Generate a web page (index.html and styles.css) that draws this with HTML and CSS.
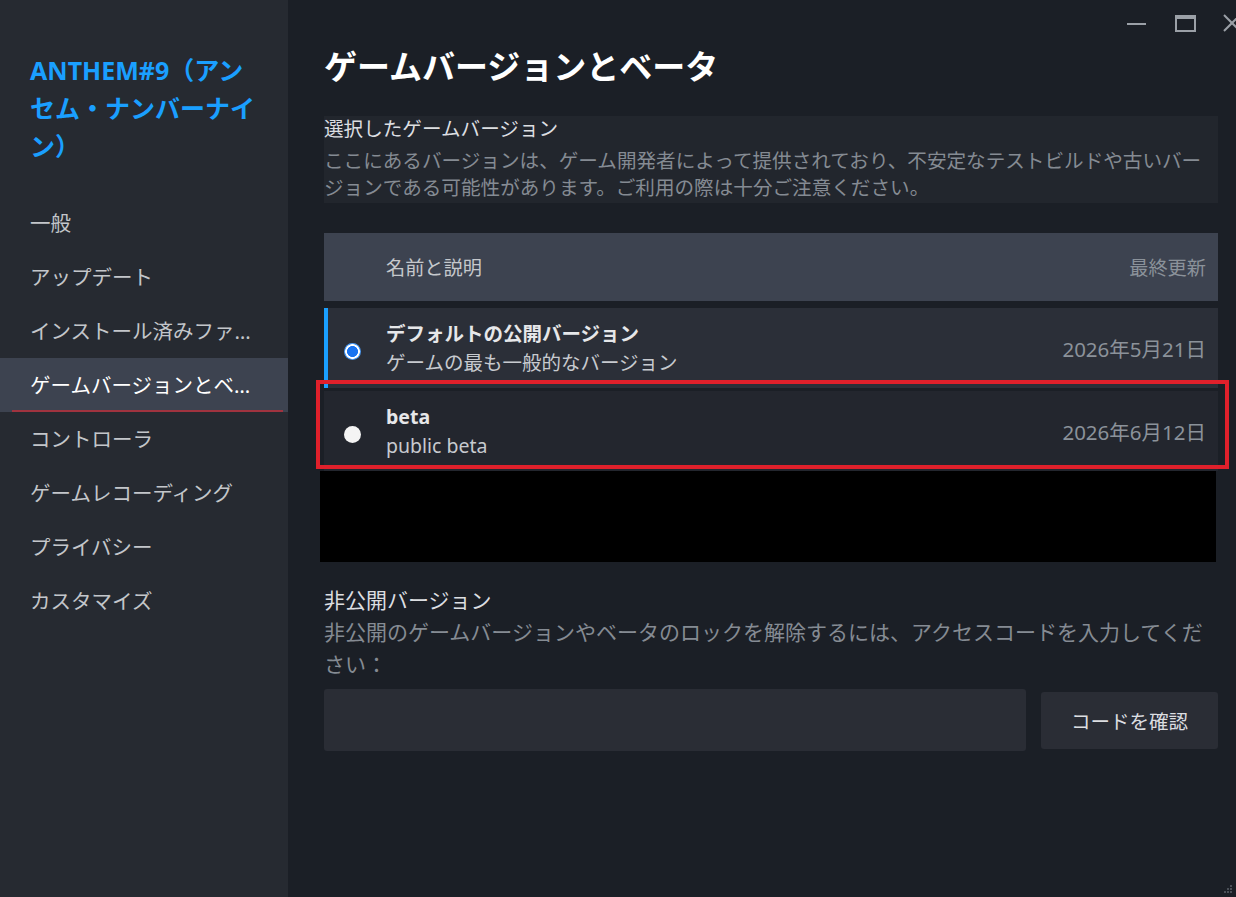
FILE: index.html
```html
<!DOCTYPE html>
<html lang="ja">
<head>
    <meta charset="UTF-8">
    <meta name="viewport" content="width=device-width, initial-scale=1.0">
    <title>プロパティ - ゲームバージョンとベータ</title>
<link rel="stylesheet" href="styles.css">
</head>
<body>
    <div class="window">
        <nav class="sidebar">
            <h2 class="game-title">ANTHEM#9（アンセム・ナンバーナイン）</h2>
            <ul class="menu">
                <li>一般</li>
                <li>アップデート</li>
                <li>インストール済みファイル</li>
                <li class="active">ゲームバージョンとベータ</li>
                <li>コントローラ</li>
                <li>ゲームレコーディング</li>
                <li>プライバシー</li>
                <li>カスタマイズ</li>
            </ul>
        </nav>

        <main class="content">
            <!-- window buttons: minimize / maximize / close -->
            <svg class="winctrl" width="120" height="40" viewBox="0 0 120 40">
                <line x1="11" y1="24" x2="30" y2="24" stroke="#9ba0a7" stroke-width="2"/>
                <rect x="60" y="16" width="19" height="15" fill="none" stroke="#9ba0a7" stroke-width="2"/>
                <line x1="59" y1="17.5" x2="80" y2="17.5" stroke="#9ba0a7" stroke-width="3"/>
                <line x1="108" y1="15" x2="124" y2="31" stroke="#9ba0a7" stroke-width="2"/>
                <line x1="124" y1="15" x2="108" y2="31" stroke="#9ba0a7" stroke-width="2"/>
            </svg>

            <h1 class="page-title">ゲームバージョンとベータ</h1>

            <div class="notice">
                <h3>選択したゲームバージョン</h3>
                <p>ここにあるバージョンは、ゲーム開発者によって提供されており、不安定なテストビルドや古いバージョンである可能性があります。ご利用の際は十分ご注意ください。</p>
            </div>

            <div class="table-head">
                <span>名前と説明</span>
                <span class="muted">最終更新</span>
            </div>

            <div class="versions">
                <div class="row selected">
                    <span class="radio on"></span>
                    <div class="info">
                        <strong>デフォルトの公開バージョン</strong>
                        <span>ゲームの最も一般的なバージョン</span>
                    </div>
                    <span class="date">2026年5月21日</span>
                </div>
                <div class="row">
                    <span class="radio"></span>
                    <div class="info">
                        <strong>beta</strong>
                        <span>public beta</span>
                    </div>
                    <span class="date">2026年6月12日</span>
                </div>
                <div class="empty"></div>
                <div class="highlight"></div>
            </div>

            <div class="private">
                <h3>非公開バージョン</h3>
                <p>非公開のゲームバージョンやベータのロックを解除するには、アクセスコードを入力してください：</p>
                <div class="code-row">
                    <input class="code-input" type="text">
                    <button class="code-btn">コードを確認</button>
                </div>
            </div>

            <svg class="grip" width="10" height="10" viewBox="0 0 10 10">
                <rect x="7" y="1" width="2" height="2" fill="#4a4f57"/>
                <rect x="4" y="4" width="2" height="2" fill="#4a4f57"/>
                <rect x="7" y="4" width="2" height="2" fill="#4a4f57"/>
                <rect x="1" y="7" width="2" height="2" fill="#4a4f57"/>
                <rect x="4" y="7" width="2" height="2" fill="#4a4f57"/>
                <rect x="7" y="7" width="2" height="2" fill="#4a4f57"/>
            </svg>
        </main>
    </div>
</body>
</html>
```

FILE: styles.css
```css
*{
    padding: 0;
    margin: 0;
    box-sizing: border-box;
}
body{
    height: 100vh;
    width: 100%;
    overflow: hidden;
    background: #1b1f26;
    font-family: "Noto Sans", "Noto Sans CJK JP", sans-serif;
}
.window{
    height: 100%;
    display: flex;
}

/* left column */
.sidebar{
    width: 288px;
    flex-shrink: 0;
    background: #262a31;
}
.game-title{
    padding: 51px 26px 0 30px;
    color: #1a9fff;
    font-size: 25px;
    line-height: 38px;
    font-weight: 700;
}
.menu{
    list-style: none;
    margin-top: 31px;
}
.menu li{
    position: relative;
    height: 54px;
    line-height: 54px;
    padding: 0 28px 0 30px;
    color: #c3c6ca;
    font-size: 20.5px;
    white-space: nowrap;
    overflow: hidden;
    text-overflow: ellipsis;
}
.menu li.active{
    background: #3d4350;
    color: #fff;
}
.menu li.active::after{
    content: "";
    position: absolute;
    left: 12px;
    right: 5px;
    bottom: 0;
    height: 2px;
    background: #a0333f;
}

/* right column */
.content{
    position: relative;
    flex: 1;
    padding: 47px 18px 0 36px;
}
.winctrl{
    position: absolute;
    top: 0;
    right: 0;
}
.grip{
    position: absolute;
    right: 3px;
    bottom: 3px;
}
.page-title{
    color: #fff;
    font-size: 33px;
    line-height: 40px;
    font-weight: 700;
}
.notice{
    margin-top: 29px;
    background: #22262d;
    padding-bottom: 2px;
}
.notice h3{
    color: #dcdee1;
    font-size: 19.6px;
    font-weight: 400;
    line-height: 26px;
    margin-bottom: 5px;
}
.notice p{
    color: #858b93;
    font-size: 19.6px;
    line-height: 27px;
}

.table-head{
    margin-top: 30px;
    height: 68px;
    background: #3d4350;
    display: flex;
    align-items: center;
    justify-content: space-between;
    padding: 0 12px 0 62px;
    color: #c5c8cc;
    font-size: 19.2px;
}
.muted{
    color: #8b929a;
    font-size: 19.2px;
}

.versions{
    position: relative;
    margin-top: 7px;
}
.row{
    height: 80px;
    display: flex;
    align-items: center;
    padding: 0 12px 0 20px;
    background: #23262e;
    margin-bottom: 3px;
}
.row.selected{
    background: #2b2f38;
    border-left: 4px solid #1a9fff;
    padding-left: 16px;
}
.radio{
    width: 17px;
    height: 17px;
    border-radius: 50%;
    background: #f4f4f4;
    flex-shrink: 0;
    margin-top: 6px;
}
.radio.on{
    background: radial-gradient(circle closest-side, #1a74f0 0 5.2px, #fff 5.8px 7px, #4d9cf5 7.6px);
}
.info{
    flex: 1;
    display: flex;
    flex-direction: column;
    margin-left: 25px;
    line-height: 29px;
}
.info strong{
    color: #e6e7e9;
    font-size: 19.5px;
    font-weight: 700;
}
.info span{
    color: #c7cacf;
    font-size: 19.5px;
}
.date{
    color: #8b929a;
    font-size: 20.5px;
}
.empty{
    height: 91px;
    margin: -3px 2px 0 -4px;
    background: #000;
}
.highlight{
    position: absolute;
    top: 72px;
    left: -8px;
    right: -11px;
    height: 89px;
    border: 4px solid #e0202b;
    pointer-events: none;
}

.private{
    margin-top: 22px;
}
.private h3{
    color: #dcdee1;
    font-size: 21px;
    font-weight: 400;
    line-height: 32px;
}
.private p{
    color: #858b93;
    font-size: 21px;
    line-height: 32px;
}
.code-row{
    margin-top: 9px;
    display: flex;
    align-items: center;
    gap: 15px;
}
.code-input{
    width: 702px;
    height: 62px;
    border: none;
    border-radius: 3px;
    background: #2a2d35;
    outline: none;
}
.code-btn{
    flex: 1;
    height: 57px;
    border: none;
    border-radius: 3px;
    background: #2a2d35;
    color: #dcdee1;
    font-family: "Noto Sans CJK JP", sans-serif;
    font-size: 19.5px;
}
```
